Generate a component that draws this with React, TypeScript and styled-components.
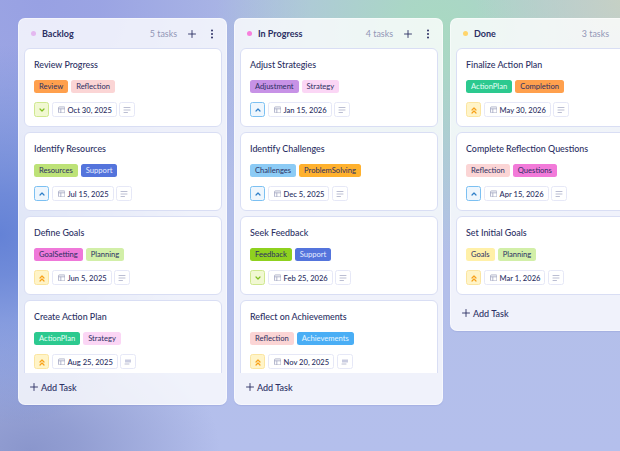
import React from "react";
import styled, { createGlobalStyle } from "styled-components";

const Global = createGlobalStyle`
  html, body { margin: 0; padding: 0; width: 620px; height: 451px; overflow: hidden; }
  body { font-family: "Lato", "Liberation Sans", sans-serif; color: #2b2f63; }
  #root { width: 620px; height: 451px; }
`;

const Page = styled.div`
  width: 620px;
  height: 451px;
  box-sizing: border-box;
  padding: 18px 0 0 18px;
  overflow: hidden;
  display: flex;
  align-items: flex-start;
  gap: 7px;
  background:
    radial-gradient(circle at 0px 235px, #6482d6 0, rgba(100,130,214,0.85) 40px, rgba(100,130,214,0) 190px),
    radial-gradient(ellipse 190px 130px at 30px 451px, #8a96cc 0, rgba(138,150,204,0.8) 50px, rgba(138,150,204,0) 100%),
    radial-gradient(circle at 625px 0px, #c6d1c4 0, rgba(198,209,196,0) 150px),
    radial-gradient(circle at 440px 30px, #a9d9c2 0, rgba(169,217,194,0.9) 40px, rgba(169,217,194,0) 225px),
    radial-gradient(circle at 40px 0px, #98a1e3 0, rgba(152,161,227,0.9) 60px, rgba(152,161,227,0) 270px),
    linear-gradient(180deg, #b2bfe6 0%, #b4bfec 100%);
`;

const Column = styled.section`
  flex: 0 0 209px;
  max-height: 387px;
  box-sizing: border-box;
  display: flex;
  flex-direction: column;
  border-radius: 7px;
  border: 1px solid rgba(255, 255, 255, 0.45);
  background: rgba(255, 255, 255, 0.8);
  box-shadow: 0 1px 1px rgba(90, 100, 180, 0.15);
  overflow: hidden;
`;

const Header = styled.header`
  flex: none;
  height: 29px;
  box-sizing: border-box;
  display: flex;
  align-items: center;
  padding: 0 9px 0 12px;
`;

const Dot = styled.span<{ $color: string }>`
  width: 5px;
  height: 5px;
  border-radius: 50%;
  background: ${(p) => p.$color};
  margin-right: 6px;
`;

const Title = styled.h2`
  flex: 1;
  margin: 0;
  font-size: 9px;
  font-weight: 700;
  color: #2b2f63;
`;

const Count = styled.span`
  font-size: 8.9px;
  color: #9295b6;
  margin-right: 10px;
`;

const HeadIcon = styled.svg`
  width: 10px;
  height: 10px;
  flex: none;
  color: #2b2f63;
  & + & { margin-left: 10px; }
`;

const List = styled.div`
  flex: 1;
  min-height: 0;
  overflow: hidden;
  display: flex;
  flex-direction: column;
  gap: 5px;
  padding: 0 4.5px 4px;
`;

const Card = styled.article`
  flex: none;
  height: 79px;
  box-sizing: border-box;
  background: #fff;
  border: 1px solid #d9def4;
  border-radius: 6px;
  padding: 0 10px 0 9.5px;
`;

const CardTitle = styled.h3`
  margin: 9px 0 9px;
  font-size: 8.9px;
  line-height: 13px;
  font-weight: 500;
  color: #2b2f63;
`;

const Tags = styled.div`
  display: flex;
  gap: 3px;
`;

const Tag = styled.span<{ $bg: string; $fg?: string }>`
  height: 12.5px;
  box-sizing: border-box;
  padding: 0 5px;
  border-radius: 2.5px;
  font-size: 7.6px;
  line-height: 12.5px;
  background: ${(p) => p.$bg};
  color: ${(p) => p.$fg ?? "#2b2f63"};
  white-space: nowrap;
`;

const Meta = styled.div`
  display: flex;
  gap: 2.5px;
  margin-top: 9.5px;
`;

const Priority = styled.span<{ $bg: string; $bd: string; $fg: string }>`
  width: 15px;
  height: 15px;
  box-sizing: border-box;
  display: flex;
  align-items: center;
  justify-content: center;
  border-radius: 2.5px;
  background: ${(p) => p.$bg};
  border: 1px solid ${(p) => p.$bd};
  color: ${(p) => p.$fg};
`;

const DateChip = styled.span`
  height: 15px;
  box-sizing: border-box;
  display: flex;
  align-items: center;
  gap: 2.5px;
  padding: 0 4px 0 5px;
  border: 1px solid #e6e8f7;
  border-radius: 2.5px;
  font-size: 7.6px;
  font-weight: 500;
  color: #2b2f63;
  white-space: nowrap;
`;

const Notes = styled.span`
  width: 16px;
  height: 15px;
  box-sizing: border-box;
  display: flex;
  align-items: center;
  justify-content: center;
  border: 1px solid #e6e8f7;
  border-radius: 2.5px;
  color: #a9adc6;
`;

const Footer = styled.footer`
  flex: none;
  height: 31px;
  box-sizing: border-box;
  display: flex;
  align-items: center;
  gap: 2px;
  padding: 0 0 3px 10px;
  font-size: 9px;
  font-weight: 500;
  color: #2b2f63;
`;

const Chevron = ({ kind }: { kind: "low" | "mid" | "high" }) => (
  <svg width="8" height="8" viewBox="0 0 8 8" fill="none" stroke="currentColor" strokeWidth="1.2" strokeLinecap="round" strokeLinejoin="round">
    {kind === "low" && <path d="M2 3l2 2 2-2" />}
    {kind === "mid" && <path d="M2 5l2-2 2 2" />}
    {kind === "high" && <path d="M2 4l2-2 2 2M2 7l2-2 2 2" />}
  </svg>
);

const Calendar = () => (
  <svg width="7.5" height="7.5" viewBox="0 0 8 8" fill="none" stroke="#9a9ebb" strokeWidth="0.8">
    <rect x="0.6" y="1" width="6.8" height="6.4" rx="0.8" />
    <path d="M0.6 3h6.8M3 3v4.4" />
  </svg>
);

const Lines = ({ dense }: { dense?: boolean }) => (
  <svg width="8" height="8" viewBox="0 0 8 8" fill="none" stroke="currentColor" strokeWidth="0.8" strokeLinecap="round">
    {dense ? (
      <>
        <rect x="1" y="1.5" width="6" height="3" fill="#c9cce0" stroke="none" />
        <path d="M1 6h4" />
      </>
    ) : (
      <path d="M1 1.5h6M1 4h6M1 6.5h3.5" />
    )}
  </svg>
);

const Plus = () => (
  <HeadIcon viewBox="0 0 10 10" fill="none" stroke="currentColor" strokeWidth="0.9" strokeLinecap="round">
    <path d="M5 1.5v7M1.5 5h7" />
  </HeadIcon>
);

const More = () => (
  <HeadIcon viewBox="0 0 10 10" fill="currentColor">
    <circle cx="5" cy="1.5" r="1" />
    <circle cx="5" cy="5" r="1" />
    <circle cx="5" cy="8.5" r="1" />
  </HeadIcon>
);

const tagStyles: Record<string, { bg: string; fg?: string }> = {
  Review: { bg: "#ffa04d" },
  Reflection: { bg: "#fbd5d5" },
  Resources: { bg: "#bde277" },
  Support: { bg: "#5474dc", fg: "#e6ebff" },
  GoalSetting: { bg: "#ef78d9" },
  Planning: { bg: "#d2efa8" },
  ActionPlan: { bg: "#2cc98f", fg: "#e6fff6" },
  Strategy: { bg: "#fbd6f5" },
  Adjustment: { bg: "#c792e6" },
  Challenges: { bg: "#8ccbf5" },
  ProblemSolving: { bg: "#ffb12e" },
  Feedback: { bg: "#8fd11f" },
  Achievements: { bg: "#4aaef5", fg: "#e6f5ff" },
  Completion: { bg: "#ffa04d" },
  Questions: { bg: "#f27ad9" },
  Goals: { bg: "#fff0a8" },
};

const priorityStyles = {
  low: { $bg: "#f1f8d2", $bd: "#cfe88f", $fg: "#7fbf1f" },
  mid: { $bg: "#eef6fd", $bd: "#7cc0f2", $fg: "#2f7fc8" },
  high: { $bg: "#fff4c8", $bd: "#fbe5a0", $fg: "#f7a11a" },
};

type Task = { title: string; tags: string[]; priority: "low" | "mid" | "high"; date: string; dense?: boolean };

const columns: { name: string; dot: string; count: string; tasks: Task[] }[] = [
  {
    name: "Backlog",
    dot: "#e4b8f0",
    count: "5 tasks",
    tasks: [
      { title: "Review Progress", tags: ["Review", "Reflection"], priority: "low", date: "Oct 30, 2025" },
      { title: "Identify Resources", tags: ["Resources", "Support"], priority: "mid", date: "Jul 15, 2025" },
      { title: "Define Goals", tags: ["GoalSetting", "Planning"], priority: "high", date: "Jun 5, 2025" },
      { title: "Create Action Plan", tags: ["ActionPlan", "Strategy"], priority: "high", date: "Aug 25, 2025", dense: true },
    ],
  },
  {
    name: "In Progress",
    dot: "#f77fdc",
    count: "4 tasks",
    tasks: [
      { title: "Adjust Strategies", tags: ["Adjustment", "Strategy"], priority: "mid", date: "Jan 15, 2026" },
      { title: "Identify Challenges", tags: ["Challenges", "ProblemSolving"], priority: "mid", date: "Dec 5, 2025" },
      { title: "Seek Feedback", tags: ["Feedback", "Support"], priority: "low", date: "Feb 25, 2026" },
      { title: "Reflect on Achievements", tags: ["Reflection", "Achievements"], priority: "high", date: "Nov 20, 2025", dense: true },
    ],
  },
  {
    name: "Done",
    dot: "#ffd56b",
    count: "3 tasks",
    tasks: [
      { title: "Finalize Action Plan", tags: ["ActionPlan", "Completion"], priority: "high", date: "May 30, 2026" },
      { title: "Complete Reflection Questions", tags: ["Reflection", "Questions"], priority: "mid", date: "Apr 15, 2026" },
      { title: "Set Initial Goals", tags: ["Goals", "Planning"], priority: "high", date: "Mar 1, 2026" },
    ],
  },
];

export default function App() {
  return (
    <Page>
      <Global />
      {columns.map((c) => (
        <Column key={c.name}>
          <Header>
            <Dot $color={c.dot} />
            <Title>{c.name}</Title>
            <Count>{c.count}</Count>
            <Plus />
            <More />
          </Header>
          <List>
            {c.tasks.map((t) => (
              <Card key={t.title}>
                <CardTitle>{t.title}</CardTitle>
                <Tags>
                  {t.tags.map((n) => (
                    <Tag key={n} $bg={tagStyles[n].bg} $fg={tagStyles[n].fg}>{n}</Tag>
                  ))}
                </Tags>
                <Meta>
                  <Priority {...priorityStyles[t.priority]}><Chevron kind={t.priority} /></Priority>
                  <DateChip><Calendar />{t.date}</DateChip>
                  <Notes><Lines dense={t.dense} /></Notes>
                </Meta>
              </Card>
            ))}
          </List>
          <Footer>
            <HeadIcon viewBox="0 0 10 10" fill="none" stroke="currentColor" strokeWidth="0.9" strokeLinecap="round">
              <path d="M5 1.5v7M1.5 5h7" />
            </HeadIcon>
            Add Task
          </Footer>
        </Column>
      ))}
    </Page>
  );
}
